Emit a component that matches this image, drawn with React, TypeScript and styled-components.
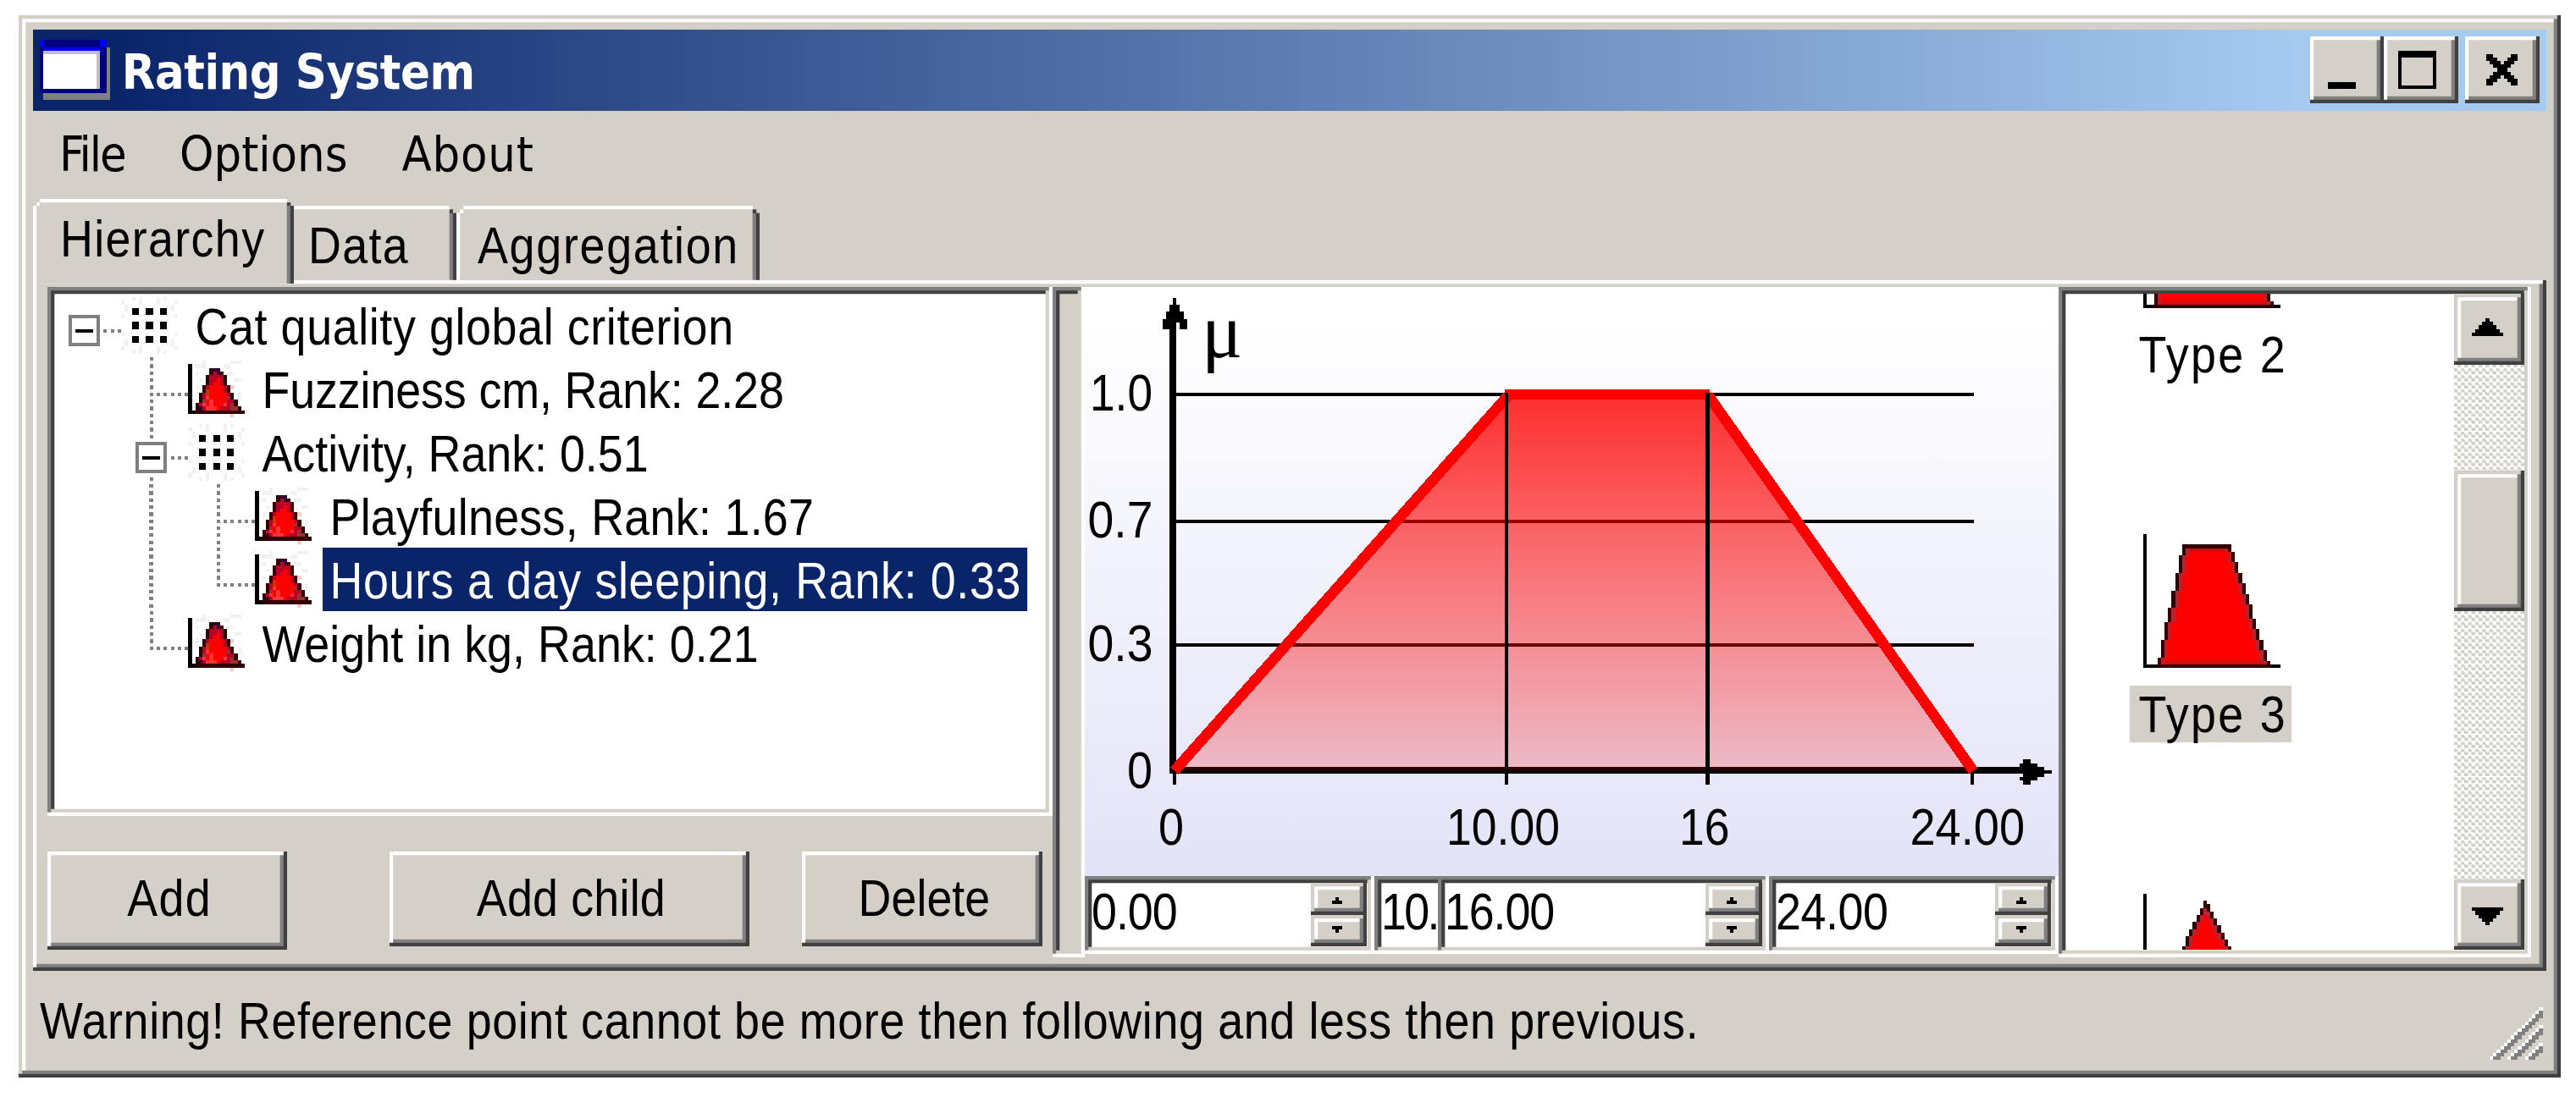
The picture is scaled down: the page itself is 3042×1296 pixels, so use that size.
import React from 'react';
import styled, { createGlobalStyle, css } from 'styled-components';

// one logical window pixel on screen
const UNIT = 25 / 6;
const u = (n: number) => `${(n * UNIT).toFixed(2)}px`;

const colors = {
  face: '#d4d0c8',
  white: '#ffffff',
  shadow: '#808080',
  dark: '#404040',
  highlight: '#0a246a',
};

const raised = css`
  box-shadow: inset -${u(1)} -${u(1)} ${colors.dark}, inset ${u(1)} ${u(1)} ${colors.white},
    inset -${u(2)} -${u(2)} ${colors.shadow};
`;

const raisedSoft = css`
  box-shadow: inset -${u(1)} -${u(1)} ${colors.dark}, inset ${u(1)} ${u(1)} ${colors.face},
    inset -${u(2)} -${u(2)} ${colors.shadow}, inset ${u(2)} ${u(2)} ${colors.white};
`;

const sunken = css`
  box-shadow: inset -${u(1)} -${u(1)} ${colors.white}, inset ${u(1)} ${u(1)} ${colors.shadow},
    inset -${u(2)} -${u(2)} ${colors.face}, inset ${u(2)} ${u(2)} ${colors.dark};
`;

const GlobalStyle = createGlobalStyle`
  * {
    box-sizing: border-box;
  }

  body {
    margin: 0;
    background: #ffffff;
    overflow: hidden;
  }

  svg {
    display: block;
    flex: none;
  }
`;

const Screen = styled.div`
  width: 3042px;
  height: 1296px;
  padding: 18px 0 0 21.5px;
  background: ${colors.white};
`;

const Window = styled.div`
  display: flex;
  flex-direction: column;
  width: 3002.5px;
  height: 1255px;
  padding: 17px 17px 16.7px 17.5px;
  background: ${colors.face};
  color: #000000;
  font-family: 'Liberation Sans', Arial, sans-serif;
  font-size: 60.5px;
  ${raisedSoft}
`;

/* The dialog font is narrower than its substitute. */
const Label = styled.span<{ $track?: number; $center?: boolean }>`
  display: inline-block;
  white-space: nowrap;
  letter-spacing: ${props => props.$track || 0}px;
  transform: scaleX(0.89);
  transform-origin: ${props => (props.$center ? '50%' : '0')} 50%;
`;

const TitleBar = styled.div`
  display: flex;
  flex: none;
  height: ${u(23)};
  padding: ${u(2)} ${u(2)} 0 ${u(2)};
  background: linear-gradient(to right, ${colors.highlight} 3%, #a6caf0 90.3%);
`;

const TitleText = styled.div`
  flex: 1;
  margin-top: -9.3px;
  padding-left: 13px;
  color: ${colors.white};
  font: bold 57.2px/102px 'DejaVu Sans Condensed', 'DejaVu Sans', sans-serif;
  letter-spacing: -0.4px;
  white-space: nowrap;
`;

const CaptionButton = styled.div<{ $gap?: boolean }>`
  width: ${u(21)};
  height: ${u(19)};
  margin-left: ${props => (props.$gap ? u(2) : 0)};
  background: ${colors.face};
  ${raised}
`;

const MenuBar = styled.div`
  display: flex;
  flex: none;
  height: ${u(25)};
  padding-left: 31px;
  font: 57.2px/102px 'DejaVu Sans Condensed', 'DejaVu Sans', sans-serif;
`;

const MenuItem = styled.div<{ $width: number; $track: number }>`
  width: ${props => props.$width}px;
  letter-spacing: ${props => props.$track}px;
`;

const TabStrip = styled.div`
  display: flex;
  flex: none;
  align-items: flex-end;
  height: ${u(23)};
`;

const Tab = styled.div<{ $width: number; $pad: number; $active?: boolean; $tucked?: boolean }>`
  position: relative;
  z-index: ${props => (props.$active ? 1 : 0)};
  width: ${props => u(props.$width)};
  height: ${props => u(props.$active ? 24 : 21)};
  margin-bottom: ${props => (props.$active ? `-${u(1)}` : 0)};
  margin-left: ${props => (props.$tucked ? `-${u(2)}` : 0)};
  padding-left: ${props => props.$pad}px;
  background: ${colors.face};
  line-height: 94px;
  box-shadow: inset 0 ${u(1)} ${colors.white}, inset ${u(1)} 0 ${colors.white}, inset -${u(1)} 0 ${colors.dark},
    inset -${u(2)} 0 ${colors.shadow};
  clip-path: polygon(
    0 ${u(2)},
    ${u(1)} ${u(2)},
    ${u(1)} ${u(1)},
    ${u(2)} ${u(1)},
    ${u(2)} 0,
    calc(100% - ${u(2)}) 0,
    calc(100% - ${u(2)}) ${u(1)},
    calc(100% - ${u(1)}) ${u(1)},
    calc(100% - ${u(1)}) ${u(2)},
    100% ${u(2)},
    100% 100%,
    0 100%
  );

  &::before,
  &::after {
    content: '';
    position: absolute;
    top: ${u(1)};
    width: ${u(1)};
    height: ${u(1)};
  }

  &::before {
    left: ${u(1)};
    background: ${colors.white};
  }

  &::after {
    right: ${u(1)};
    background: ${colors.dark};
  }
`;

const Page = styled.div`
  display: flex;
  flex: none;
  height: ${u(196)};
  padding: ${u(2)} 0 0 ${u(4)};
  ${raised}
`;

const LeftColumn = styled.div`
  display: flex;
  flex-direction: column;
  width: 1187.7px;
`;

const Tree = styled.div`
  height: ${u(150)};
  padding: ${u(2)};
  background: ${colors.white};
  ${sunken}
`;

const TreeRow = styled.div`
  display: flex;
  height: ${u(18)};
`;

const NodeLabel = styled(Label)<{ $selected?: boolean }>`
  height: ${u(18)};
  margin-left: ${u(3)};
  padding: 0 8px 0 9.5px;
  background: ${props => (props.$selected ? colors.highlight : 'transparent')};
  color: ${props => (props.$selected ? colors.white : '#000000')};
  line-height: 78px;
`;

const ButtonRow = styled.div`
  display: flex;
  align-items: flex-start;
  margin-top: ${u(10)};
`;

const Button = styled.div<{ $width: number; $height: number; $gap?: number }>`
  flex: none;
  width: ${props => u(props.$width)};
  height: ${props => u(props.$height)};
  margin-left: ${props => u(props.$gap || 0)};
  padding-left: 5px;
  background: ${colors.face};
  line-height: 111px;
  text-align: center;
  ${raised}
`;

const Splitter = styled.div`
  width: ${u(9)};
  height: ${u(190)};
  background: ${colors.face};
  ${sunken}
`;

const ChartColumn = styled.div`
  display: flex;
  flex-direction: column;
  width: ${u(276)};
`;

const Plot = styled.div`
  height: ${u(167)};
  background: linear-gradient(to bottom, #ffffff 5%, #e3e3f8 100%);
`;

const SpinRow = styled.div`
  display: flex;
  height: ${u(22)};
`;

const SpinSlot = styled.div<{ $width: number }>`
  width: ${props => u(props.$width)};
  overflow: hidden;
`;

const SpinBox = styled.div<{ $width: number }>`
  display: flex;
  justify-content: space-between;
  width: ${props => u(props.$width)};
  height: 100%;
  padding: ${u(2)};
  background: ${colors.white};
  line-height: 68px;
  ${sunken}
`;

const SpinButtons = styled.div`
  display: flex;
  flex-direction: column;
`;

const SpinButton = styled.div`
  width: ${u(16)};
  height: ${u(9)};
  background: ${colors.face};
  ${raisedSoft}
`;

const TypePane = styled.div`
  display: flex;
  width: ${u(134)};
  height: ${u(190)};
  padding: ${u(2)};
  background: ${colors.white};
  ${sunken}
`;

const TypeList = styled.div`
  flex: 1;
  overflow: hidden;
`;

const TypeItem = styled.div`
  display: flex;
  flex-direction: column;
  align-items: center;
  width: ${u(82)};
  height: ${u(102)};

  /* scrolled part way into the second entry */
  &:first-child {
    margin-top: -${u(34)};
  }

  svg {
    margin-left: ${u(1)};
  }
`;

const TypeName = styled(Label)<{ $selected?: boolean }>`
  width: 215px;
  height: ${u(16)};
  margin-top: ${u(5)};
  padding-left: 6px;
  background: ${props => (props.$selected ? colors.face : 'transparent')};
  line-height: 69px;
  text-align: center;
`;

const ScrollBar = styled.div`
  display: flex;
  flex-direction: column;
  width: ${u(20)};
  background: repeating-conic-gradient(${colors.face} 0 25%, ${colors.white} 0 50%) 0 0 / ${u(2)} ${u(2)};
`;

const ScrollPart = styled.div<{ $height: number; $top?: number; $end?: boolean }>`
  height: ${props => u(props.$height)};
  margin-top: ${props => (props.$end ? 'auto' : u(props.$top || 0))};
  background: ${colors.face};
  ${raisedSoft}
`;

const StatusBar = styled.div`
  display: flex;
  flex: 1;
  align-items: flex-end;
  justify-content: space-between;
  min-height: 0;
  padding: 0 ${u(1)} ${u(1)} 7.5px;
`;

const StatusText = styled(Label)`
  align-self: flex-start;
  line-height: 118px;
`;

type Rect = [number, number, number, number, string?];

const Pixels: React.FunctionComponent<{ width: number; height: number; rects: Rect[] }> = ({
  width,
  height,
  rects,
}) => (
  <svg width={width * UNIT} height={height * UNIT} viewBox={`0 0 ${width} ${height}`} shapeRendering="crispEdges">
    {rects.map(([x, y, w, h, fill], i) => (
      <rect key={i} x={x} y={y} width={w} height={h} fill={fill || '#000'} />
    ))}
  </svg>
);

const appIcon: Rect[] = [
  [1, 2, 19, 15, '#808080'],
  [0, 0, 19, 15, '#000080'],
  [0, 0, 1, 2, '#0000ff'],
  [17, 0, 2, 2, '#0000ff'],
  [1, 2, 16, 1, '#0000ff'],
  [1, 3, 16, 11, '#c0c0c0'],
  [1, 4, 15, 10, '#ffffff'],
];

const minimizeGlyph: Rect[] = [[5, 13, 8, 2]];

const maximizeGlyph: Rect[] = [
  [4, 4, 11, 2],
  [4, 6, 1, 9],
  [14, 6, 1, 9],
  [4, 14, 11, 1],
];

const fromRows = (rows: string[], palette: Record<string, string>, dx = 0, dy = 0): Rect[] =>
  rows.flatMap((row, y) =>
    row
      .split('')
      .map((c, x): Rect => [x + dx, y + dy, 1, 1, palette[c]])
      .filter(rect => rect[4])
  );

const closeGlyph = fromRows(
  [
    'XX.....XX',
    'XXX...XXX',
    '.XXX.XXX.',
    '..XXXXX..',
    '...XXX...',
    '..XXXXX..',
    '.XXX.XXX.',
    'XXX...XXX',
    'XX.....XX',
  ],
  { X: '#000' },
  6,
  5
);

const arrow = (cx: number, top: number, size: number, up: boolean): Rect[] =>
  Array.from({ length: size }, (_, i): Rect => {
    const half = up ? i : size - 1 - i;
    return [cx - half, top + i, half * 2 + 1, 1];
  });

const leafIcon = [
  'K...............',
  'K.....DPP.......',
  'K.....DMPD......',
  'K....DMMMMD.....',
  'K....DMMRMD.....',
  'K....DMRRMD.....',
  'K...DMRRRRMD....',
  'K...DORRRRMD....',
  'K..DMORRRRRMD...',
  'K..DMLRRRRRBD...',
  'K..DBRLRRRRMMD..',
  'K.DMLRLRRRLMBD..',
  'K.DPMLLLRMMMBBD.',
  'KKDDDDDDDDDDDDDD',
];

const leafPalette = {
  K: '#000000',
  D: '#330000',
  P: '#330033',
  M: '#b80028',
  R: '#ff0000',
  B: '#993333',
  L: '#ff3333',
  O: '#cc3300',
  '.': '',
};

const speck = '#f1f1f1';

const leafSpecks: Rect[] = [
  [2, 0, 2, 1, speck],
  [4, -1, 1, 2, speck],
  [10, 0, 2, 1, speck],
  [12, -1, 3, 1, speck],
  [2, 2, 1, 1, speck],
  [11, 2, 2, 1, speck],
  [3, 4, 1, 1, speck],
  [13, 4, 2, 1, speck],
  [2, 6, 1, 1, speck],
  [12, 6, 1, 1, '#f8caca'],
  [14, 8, 1, 2, speck],
  [12, 14, 1, 1, '#f8caca'],
];

const gridIcon = (x: number): Rect[] => {
  const specks = [
    [3, -3, 1],
    [5, -3, 2],
    [10, -3, 2],
    [12, -3, 1],
    [0, -2, 1],
    [15, -2, 1],
    [1, -1, 2],
    [14, -1, 2],
    [0, 2, 1],
    [15, 2, 1],
    [7, 2, 1],
  ].flatMap(([sx, sy, h]): Rect[] => [
    [x + sx, 4 + sy, 1, h, speck],
    [x + sx, 14 - sy - h, 1, h, speck],
  ]);
  const dots = [0, 4, 8].flatMap(dy => [0, 4, 8].map((dx): Rect => [x + 3 + dx, 4 + dy, 2, 2]));
  return [...specks, ...dots];
};

type Node = {
  text: string;
  level: number;
  group?: boolean;
  last?: boolean;
  selected?: boolean;
  track: number;
  // levels whose vertical line passes through this row
  through: number[];
};

const nodes: Node[] = [
  { text: 'Cat quality global criterion', level: 0, group: true, track: 0.67, through: [] },
  { text: 'Fuzziness cm, Rank: 2.28', level: 1, track: -0.15, through: [0] },
  { text: 'Activity, Rank: 0.51', level: 1, group: true, track: -0.04, through: [0] },
  { text: 'Playfulness, Rank: 1.67', level: 2, track: 0.3, through: [0, 1] },
  { text: 'Hours a day sleeping, Rank: 0.33', level: 2, selected: true, last: true, track: 0.72, through: [0] },
  { text: 'Weight in kg, Rank: 0.21', level: 1, last: true, track: 0.03, through: [] },
];

const nodeRects = ({ level, group, last, through }: Node): Rect[] => {
  const grey = colors.shadow;
  const iconX = 19 + 19 * level;
  const lineX = 8 + 19 * level;
  const rects: Rect[] = [];

  through.forEach(l => {
    for (let y = 0; y < 18; y += 2) rects.push([27 + 19 * l, y, 1, 1, grey]);
  });
  if (last) {
    for (let y = 0; y <= 10; y += 2) rects.push([lineX, y, 1, 1, grey]);
  }
  for (let x = group ? lineX + 6 : lineX; x < iconX; x += 2) rects.push([x, 10, 1, 1, grey]);

  if (group) {
    const boxX = lineX - 4;
    rects.push([boxX, 6, 9, 9, grey], [boxX + 1, 7, 7, 7, '#fff'], [boxX + 2, 10, 5, 1]);
    return rects.concat(gridIcon(iconX));
  }
  return rects.concat(
    leafSpecks.map(([x, y, w, h, fill]): Rect => [x + iconX, y + 2, w, h, fill]),
    fromRows(leafIcon, leafPalette, iconX, 2)
  );
};

// left and right edges at the top row of the shape, then at the baseline
type Shape = { top: number; from: [number, number]; to: [number, number] };

const shapeRects = ({ top, from, to }: Shape): Rect[] => {
  const rects: Rect[] = [];
  for (let y = top; y < 37; y++) {
    const t = (y - top) / (37 - top);
    const left = Math.round(from[0] + (to[0] - from[0]) * t);
    const right = Math.round(from[1] + (to[1] - from[1]) * t);
    const inner = y === top ? '#330000' : y === top + 1 || y === 36 ? '#cc1010' : '#ff0000';
    rects.push([left, y, right - left, 1, '#330000']);
    if (right - left > 2) rects.push([left + 1, y, right - left - 2, 1, y === top ? '#330000' : '#b82230']);
    if (right - left > 4) rects.push([left + 2, y, right - left - 4, 1, inner]);
  }
  rects.push([0, 0, 1, 38], [0, 37, 39, 1], [to[0], 37, to[1] - to[0], 1, '#330000']);
  return rects;
};

const types: { name?: string; shape: Shape; selected?: boolean }[] = [
  { name: 'Type 2', shape: { top: 3, from: [3, 27], to: [3, 37] } },
  { name: 'Type 3', shape: { top: 3, from: [11, 25], to: [4, 36] }, selected: true },
  { shape: { top: 2, from: [17, 18], to: [1, 36] } },
];

const gripRects: Rect[] = [];
for (let y = 0; y < 15; y++) {
  for (let x = 0; x < 15; x++) {
    const s = x + y - 14;
    if (s < 0) continue;
    if (s % 5 === 0 && s < 15) gripRects.push([x, y, 1, 1, '#fff']);
    else if ((s % 5 === 1 || s % 5 === 2) && s < 14) gripRects.push([x, y, 1, 1, colors.shadow]);
  }
}

const axisArrows: Rect[] = [
  [24, 10, 2, 128],
  [24, 136, 242, 2],
  [25, 3, 1, 2],
  [24, 5, 3, 2],
  [23, 7, 5, 2],
  [22, 9, 7, 1],
  [22, 10, 4, 2],
  [27, 10, 2, 2],
  [272, 137, 2, 1],
  [270, 136, 2, 3],
  [268, 135, 2, 5],
  [266, 134, 2, 7],
  [265, 135, 1, 2],
  [265, 139, 1, 1],
  [25, 138, 1, 3],
  [251, 138, 1, 3],
];

const chartLabels: [string, number, number, number][] = [
  ['1.0', 6, 146, 74],
  ['0.7', 3.5, 296, 77],
  ['0.3', 3.5, 442, 77],
  ['0', 50, 592, 30],
  ['0', 87, 658.7, 30],
  ['10.00', 427, 658.7, 134],
  ['16', 702, 658.7, 59.5],
  ['24.00', 974.5, 658.7, 135.5],
];

const Chart: React.FunctionComponent = () => (
  <svg width="1150" height="696" viewBox="0 0 1150 696">
    <defs>
      <linearGradient id="membership" x1="0" y1="30" x2="0" y2="137" gradientUnits="userSpaceOnUse">
        <stop offset="0" stopColor="#f00" stopOpacity="0.82" />
        <stop offset="1" stopColor="#f00" stopOpacity="0.2" />
      </linearGradient>
    </defs>
    <g transform={`scale(${UNIT})`}>
      {[30, 66, 101].map(y => (
        <rect key={y} x="26" y={y} width="226" height="1" shapeRendering="crispEdges" />
      ))}
      {axisArrows.map(([x, y, w, h], i) => (
        <rect key={i} x={x} y={y} width={w} height={h} shapeRendering="crispEdges" />
      ))}
      <polygon points="25.5,137 119.5,30 176.5,30 251.5,137" fill="url(#membership)" />
      <g stroke="#f00" strokeWidth="3" shapeRendering="crispEdges">
        <line x1="25.4" y1="137.2" x2="119.8" y2="31" />
        <line x1="176.6" y1="30.6" x2="251.8" y2="137.2" />
        <line x1="119" y1="30.5" x2="177" y2="30.5" />
      </g>
      <rect x="119" y="30" width="1" height="111" shapeRendering="crispEdges" />
      <rect x="176" y="30" width="1" height="111" shapeRendering="crispEdges" />
    </g>
    {chartLabels.map(([text, x, y, length], i) => (
      <text key={i} x={x} y={y} textLength={length} lengthAdjust="spacingAndGlyphs">
        {text}
      </text>
    ))}
    <text x="138" y="82.7" fontFamily="'Liberation Serif', serif" fontSize="90">
      μ
    </text>
  </svg>
);

const Spin: React.FunctionComponent<{ value: string; width: number; track: number }> = ({ value, width, track }) => (
  <SpinBox $width={width}>
    <Label $track={track}>{value}</Label>
    <SpinButtons>
      <SpinButton>
        <Pixels
          width={16}
          height={9}
          rects={[
            [7, 4, 1, 1],
            [6, 5, 3, 1],
          ]}
        />
      </SpinButton>
      <SpinButton>
        <Pixels
          width={16}
          height={9}
          rects={[
            [6, 3, 3, 1],
            [7, 4, 1, 1],
          ]}
        />
      </SpinButton>
    </SpinButtons>
  </SpinBox>
);

const App: React.FunctionComponent = () => (
  <Screen>
    <GlobalStyle />
    <Window>
      <TitleBar>
        <Pixels width={20} height={18} rects={appIcon.map(([x, y, w, h, fill]): Rect => [x, y + 1, w, h, fill])} />
        <TitleText>Rating System</TitleText>
        <CaptionButton>
          <Pixels width={21} height={19} rects={minimizeGlyph} />
        </CaptionButton>
        <CaptionButton>
          <Pixels width={21} height={19} rects={maximizeGlyph} />
        </CaptionButton>
        <CaptionButton $gap>
          <Pixels width={21} height={19} rects={closeGlyph} />
        </CaptionButton>
      </TitleBar>

      <MenuBar>
        <MenuItem $width={142} $track={-2}>
          File
        </MenuItem>
        <MenuItem $width={262.5} $track={0}>
          Options
        </MenuItem>
        <MenuItem $width={200} $track={0.8}>
          About
        </MenuItem>
      </MenuBar>

      <TabStrip>
        <Tab $width={74} $pad={32} $active>
          <Label $track={1.5}>Hierarchy</Label>
        </Tab>
        <Tab $width={48} $pad={25} $tucked>
          <Label $track={1.5}>Data</Label>
        </Tab>
        <Tab $width={86} $pad={24.5}>
          <Label $track={1.9}>Aggregation</Label>
        </Tab>
      </TabStrip>

      <Page>
        <LeftColumn>
          <Tree>
            {nodes.map(node => (
              <TreeRow key={node.text}>
                <Pixels width={35 + 19 * node.level} height={18} rects={nodeRects(node)} />
                <NodeLabel $track={node.track} $selected={node.selected}>
                  {node.text}
                </NodeLabel>
              </TreeRow>
            ))}
          </Tree>
          <ButtonRow>
            <Button $width={68} $height={28}>
              <Label $track={1.5} $center>
                Add
              </Label>
            </Button>
            <Button $width={102} $height={27} $gap={29}>
              <Label $track={0.2} $center>
                Add child
              </Label>
            </Button>
            <Button $width={68} $height={27} $gap={15}>
              <Label $track={0} $center>
                Delete
              </Label>
            </Button>
          </ButtonRow>
        </LeftColumn>

        <Splitter />

        <ChartColumn>
          <Plot>
            <Chart />
          </Plot>
          <SpinRow>
            <Spin value="0.00" width={82} track={-1.2} />
            <SpinSlot $width={18}>
              <Spin value="10." width={82} track={-3} />
            </SpinSlot>
            <Spin value="16.00" width={94} track={-1.3} />
            <Spin value="24.00" width={82} track={-0.5} />
          </SpinRow>
        </ChartColumn>

        <TypePane>
          <TypeList>
            {types.map(({ name, shape, selected }, i) => (
              <TypeItem key={i}>
                <Pixels width={39} height={38} rects={shapeRects(shape)} />
                {name && (
                  <TypeName $track={2.6} $center $selected={selected}>
                    {name}
                  </TypeName>
                )}
              </TypeItem>
            ))}
          </TypeList>
          <ScrollBar>
            <ScrollPart $height={20}>
              <Pixels width={20} height={20} rects={arrow(9, 7, 5, true)} />
            </ScrollPart>
            <ScrollPart $height={40} $top={30} />
            <ScrollPart $height={20} $end>
              <Pixels width={20} height={20} rects={arrow(9, 8, 5, false)} />
            </ScrollPart>
          </ScrollBar>
        </TypePane>
      </Page>

      <StatusBar>
        <StatusText $track={0.7}>
          Warning! Reference point cannot be more then following and less then previous.
        </StatusText>
        <Pixels width={15} height={15} rects={gripRects} />
      </StatusBar>
    </Window>
  </Screen>
);

export default App;
